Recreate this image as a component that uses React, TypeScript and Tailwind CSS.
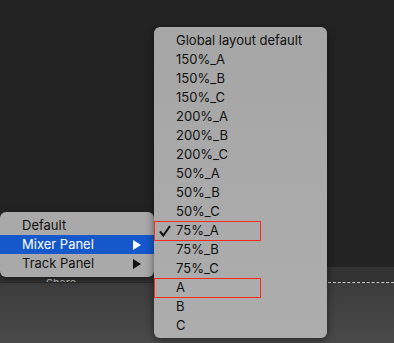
const items = [
  'Global layout default',
  '150%_A',
  '150%_B',
  '150%_C',
  '200%_A',
  '200%_B',
  '200%_C',
  '50%_A',
  '50%_B',
  '50%_C',
  '75%_A',
  '75%_B',
  '75%_C',
  'A',
  'B',
  'C',
];

function Arrow({ white }: { white?: boolean }) {
  return (
    <svg width="8" height="10" viewBox="0 0 8 10" className="mr-[13px]">
      <path d="M0 0 L8 5 L0 10 Z" fill={white ? '#fff' : '#111'} />
    </svg>
  );
}

function Check() {
  return (
    <svg width="12" height="12" viewBox="0 0 12 12" className="absolute left-[5px] top-[4px]">
      <path d="M1 6.5 L4.3 10.5 L11 1" fill="none" stroke="#111" strokeWidth="2" />
    </svg>
  );
}

export default function App() {
  return (
    <div
      className="relative flex h-[343px] w-[394px] flex-col overflow-hidden bg-[#232323] text-[13px] text-[#111]"
      style={{ fontFamily: 'Inter, "Liberation Sans", sans-serif' }}
    >
      <div className="h-[267px] shrink-0" />

      {/* bottom toolbar strip, mostly hidden by the menus */}
      <div className="flex h-[15px] items-start overflow-hidden bg-[#333333] pl-[46px] pt-[9px] text-[11px] leading-[14px] text-[#c4c4c4]">
        Share
      </div>
      <div className="flex h-px items-center bg-[#2a2a2a]">
        <div className="ml-[328px] flex-1 border-t border-dashed border-[#c8c8c8]" />
      </div>
      <div className="flex-1 bg-gradient-to-b from-[#3c3c3c] to-[#4a4a4a]" />

      {/* left menu */}
      <div className="absolute left-0 top-[212px] flex w-[154px] flex-col rounded-[6px] bg-[#a9a9a9] py-[4px] shadow-[0_2px_6px_rgba(0,0,0,0.5)]">
        <div className="flex h-[19px] items-center pl-[22px]">Default</div>
        <div className="flex h-[19px] items-center justify-between bg-[#1458cc] pl-[22px] text-white">
          <span>Mixer Panel</span>
          <Arrow white />
        </div>
        <div className="flex h-[19px] items-center justify-between pl-[22px]">
          <span>Track Panel</span>
          <Arrow />
        </div>
      </div>

      {/* right submenu */}
      <div className="absolute left-[154px] top-[27px] flex h-[311px] w-[173px] flex-col rounded-[6px] bg-gradient-to-b from-[#a6a6a6] to-[#adadad] pt-[4px] shadow-[0_2px_8px_rgba(0,0,0,0.5)]">
        {items.map((label) => (
          <div key={label} className="relative flex h-[19px] items-center pl-[22px]">
            {label === '75%_A' && <Check />}
            {label}
            {(label === '75%_A' || label === 'A') && (
              <div className="absolute left-0 top-0 h-[20px] w-[107px] border border-[#ff2a1a]" />
            )}
          </div>
        ))}
      </div>
    </div>
  );
}
